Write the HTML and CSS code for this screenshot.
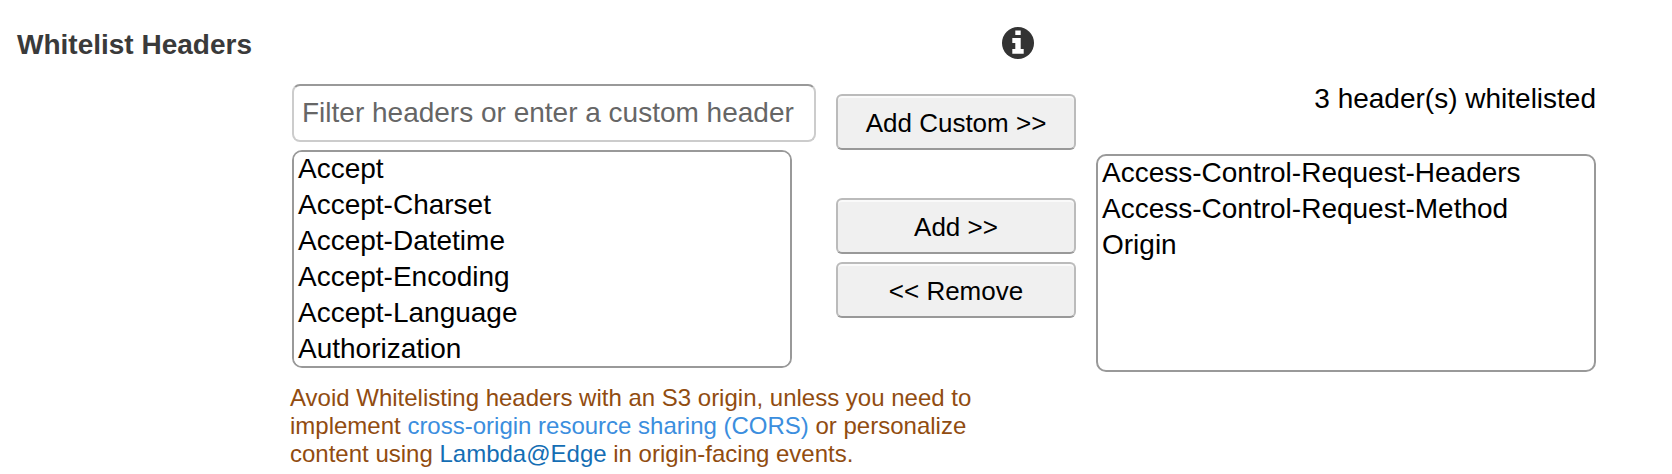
FILE: index.html
```html
<!DOCTYPE html>
<html lang="en">
<head>
<meta charset="utf-8">
<title>Whitelist Headers</title>
<link rel="stylesheet" href="styles.css">
</head>
<body>
<form class="setting">
  <header class="setting-head">
    <h2 class="setting-title">Whitelist Headers</h2>
    <button class="info" type="button" aria-label="About whitelist headers">
      <svg class="info-icon" viewBox="0 0 32 32" aria-hidden="true">
        <circle cx="16" cy="16" r="16" fill="#333"/>
        <path fill="#fff" d="M13.3 3.5h5.4V8h-5.4zM10.3 11h8.4v11h3v4.7H10.3V22h3v-6h-3z"/>
      </svg>
    </button>
  </header>
  <div class="setting-body">
    <div class="picker">
      <div class="available">
        <input class="filter" type="text" placeholder="Filter headers or enter a custom header" aria-label="Filter headers or enter a custom header">
        <select class="list list-available" size="6" multiple aria-label="Available headers">
          <option>Accept</option>
          <option>Accept-Charset</option>
          <option>Accept-Datetime</option>
          <option>Accept-Encoding</option>
          <option>Accept-Language</option>
          <option>Authorization</option>
        </select>
      </div>
      <div class="actions">
        <button class="btn btn-custom" type="button">Add Custom &gt;&gt;</button>
        <button class="btn" type="button">Add &gt;&gt;</button>
        <button class="btn" type="button">&lt;&lt; Remove</button>
      </div>
      <div class="chosen">
        <label class="count" for="chosen">3 header(s) whitelisted</label>
        <select class="list" id="chosen" size="6" multiple>
          <option>Access-Control-Request-Headers</option>
          <option>Access-Control-Request-Method</option>
          <option>Origin</option>
        </select>
      </div>
    </div>
    <p class="note">Avoid Whitelisting headers with an S3 origin, unless you need to implement <a class="link link-light" href="#cors">cross-origin resource sharing (CORS)</a> or personalize content using <a class="link" href="#lambda">Lambda@Edge</a> in origin-facing events.</p>
  </div>
</form>
</body>
</html>
```
FILE: styles.css
```css
* {
  box-sizing: border-box;
}

body {
  margin: 0;
  background: #fff;
  color: #000;
  font: 28px/28px "Liberation Sans", Arial, sans-serif;
}

.setting {
  padding: 27px 76px 0 17px;
}

.setting-head {
  display: grid;
  grid-template-columns: 275px 742fr 562fr;
  padding-bottom: 21px;
}

.setting-title {
  margin: 0;
  color: #3a3a3a;
  font-size: 28px;
  line-height: 36px;
  white-space: nowrap;
}

.info {
  grid-column: 2;
  justify-self: end;
  width: 32px;
  height: 32px;
  padding: 0;
  border: 0;
  background: none;
}

.info-icon {
  display: block;
}

.setting-body {
  padding-left: 273px;
}

.picker {
  display: grid;
  grid-template-columns: minmax(0, 524fr) minmax(0, 240fr) minmax(0, 500fr);
  gap: 20px;
  padding-left: 2px;
}

.available,
.actions,
.chosen {
  display: flex;
  flex-direction: column;
}

.available {
  gap: 8px;
}

.filter {
  width: 100%;
  height: 58px;
  padding: 0 8px;
  border: 2px solid #ccc;
  border-top-color: #999;
  border-radius: 8px;
  background: #fff;
  color: #000;
  font: inherit;
}

.filter::placeholder {
  color: #666;
  opacity: 1;
}

.list {
  width: 100%;
  height: 218px;
  margin: 0;
  padding: 0;
  overflow: auto;
  scrollbar-width: none;
  appearance: none;
  border: 2px solid #999;
  border-radius: 10px;
  background: #fff;
  color: #000;
  font: inherit;
}

.list option {
  min-height: 36px;
  padding: 1px 4px;
}

.list-available {
  width: calc(100% - 24px);
}

.actions {
  gap: 8px;
  padding-top: 10px;
}

.btn {
  height: 56px;
  padding: 2px 0 0;
  border: 2px solid #bbb;
  border-bottom-color: #999;
  border-radius: 6px;
  background: #f0f0f0;
  box-shadow: inset 0 2px 0 #fafafa;
  color: #000;
  font: inherit;
  font-size: 26px;
}

.btn-custom {
  margin-bottom: 40px;
}

.chosen {
  gap: 40px;
}

.count {
  line-height: 30px;
  text-align: right;
}

.note {
  max-width: 720px;
  margin: 12px 0 0;
  color: #914c10;
  font-size: 24px;
}

.link {
  color: #146eb4;
  text-decoration: none;
}

.link-light {
  color: #3b8ede;
}
```
